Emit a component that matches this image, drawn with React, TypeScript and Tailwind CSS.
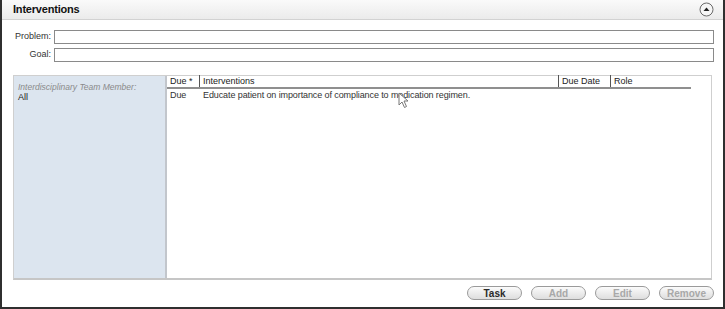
import React from "react";

const font = { fontFamily: '"Liberation Sans", Arial, sans-serif' };

function Btn({ label, enabled }: { label: string; enabled?: boolean }) {
  return (
    <div
      className={`flex h-[14px] w-[55px] items-center justify-center rounded-full border border-[#9a9a9a] bg-gradient-to-b from-[#fbfbfb] to-[#dedede] text-[10px] font-bold ${
        enabled ? "text-[#2a2a2a]" : "text-[#a8a8a8]"
      }`}
    >
      {label}
    </div>
  );
}

export default function App() {
  return (
    <div
      className="relative flex h-[309px] w-[725px] flex-col border-x-2 border-b-2 border-[#2f2f2f] bg-white text-[#333]"
      style={font}
    >
      {/* header */}
      <div className="flex h-[20px] items-center justify-between border-b border-[#d2d2d2] bg-gradient-to-b from-[#fafafa] to-[#ebebeb] pl-[11px] pr-[9px]">
        <span className="text-[11px] font-bold tracking-[-0.2px] text-[#111]">Interventions</span>
        <svg width="15" height="15" viewBox="0 0 15 15">
          <circle cx="7.5" cy="7.5" r="6.5" fill="#f6f6f6" stroke="#6a6a6a" strokeWidth="1" />
          <path d="M4.5 9 L7.5 5.5 L10.5 9 Z" fill="#222" />
        </svg>
      </div>

      {/* form */}
      <div className="mt-[10px] flex flex-col gap-[4px] pr-[9px]">
        <div className="flex items-center">
          <span className="w-[52px] pr-[3px] text-right text-[9px] text-[#333]">Problem:</span>
          <div className="h-[14px] flex-1 border border-[#8a8a8a] bg-white" />
        </div>
        <div className="flex items-center">
          <span className="w-[52px] pr-[3px] text-right text-[9px] text-[#333]">Goal:</span>
          <div className="h-[14px] flex-1 border border-[#8a8a8a] bg-white" />
        </div>
      </div>

      {/* panel */}
      <div className="ml-[11px] mr-[11px] mt-[13px] flex h-[205px] border border-[#cfcfcf] border-b-2 border-b-[#c6c6c6]">
        <div className="w-[153px] shrink-0 border-r-2 border-[#c2c6cc] bg-[#dce5ef] px-[4px] pt-[6px]">
          <div className="text-[8.5px] leading-[10px] italic text-[#8a8a8a]">Interdisciplinary Team Member:</div>
          <div className="text-[9px] leading-[10px] text-[#222]">All</div>
        </div>
        <div className="flex flex-1 flex-col pr-[20px]">
          <div className="flex h-[13px] items-end border-b-2 border-[#8f8f8f] text-[9px] leading-[12px] text-[#222]">
            <div className="w-[32px] pl-[3px]">Due *</div>
            <div className="w-[359px] border-l border-[#555] pl-[3px]">Interventions</div>
            <div className="w-[52px] border-l border-[#555] pl-[3px]">Due Date</div>
            <div className="flex-1 border-l border-[#555] pl-[3px]">Role</div>
          </div>
          <div className="flex h-[13px] items-center text-[9px] tracking-[-0.1px] text-[#333]">
            <div className="w-[32px] pl-[3px]">Due</div>
            <div className="pl-[4px]">Educate patient on importance of compliance to medication regimen.</div>
          </div>
        </div>
      </div>

      {/* buttons */}
      <div className="mt-[6px] flex justify-end gap-[9px] pr-[9px]">
        <Btn label="Task" enabled />
        <Btn label="Add" />
        <Btn label="Edit" />
        <Btn label="Remove" />
      </div>

      {/* mouse cursor */}
      <svg className="absolute left-[396px] top-[92px]" width="12" height="17" viewBox="0 0 12 17">
        <path d="M1 1 L1 13 L4 10 L6.5 15.5 L8.5 14.5 L6 9 L10 9 Z" fill="#fff" stroke="#777" strokeWidth="1" />
      </svg>
    </div>
  );
}
